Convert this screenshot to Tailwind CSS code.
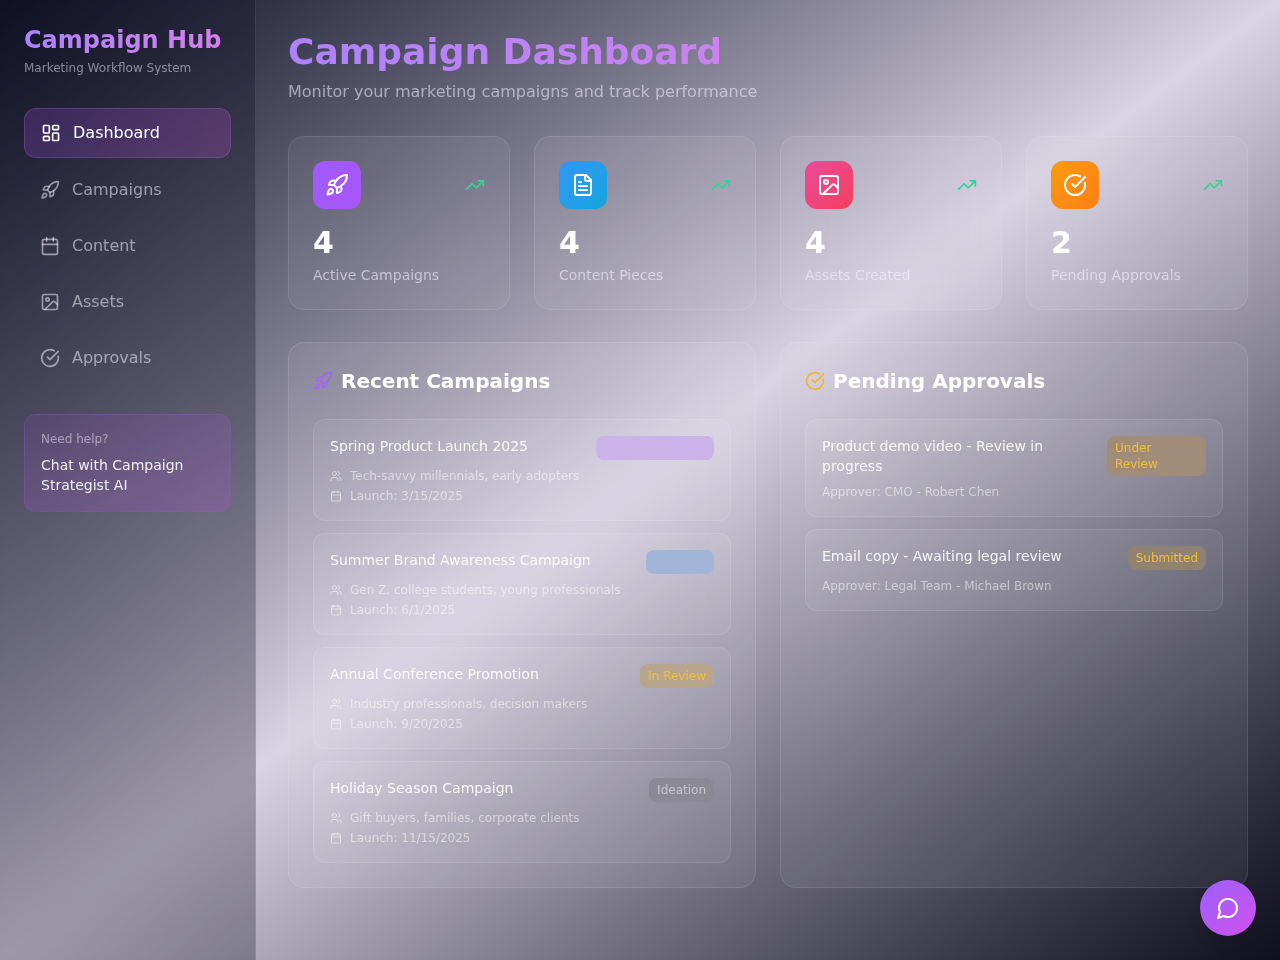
<!DOCTYPE html>
<html lang="en">
<head>
  <meta charset="UTF-8" />
  <meta name="viewport" content="width=device-width, initial-scale=1.0"/>
  <title>Campaign Hub | Dashboard</title>
  <script src="https://cdn.jsdelivr.net/npm/@tailwindcss/browser@4"></script>
</head>
<body class="h-[960px] overflow-hidden bg-gradient-to-br from-[#0f0f23] via-[#d9d3e3] to-[#0f0f1e] text-white font-['DejaVu_Sans',sans-serif]">
  <div class="flex h-full">

    <!-- Sidebar -->
    <aside class="w-64 shrink-0 h-full p-6 bg-[#0f0f23]/30 backdrop-blur-xl border-r border-white/10">
      <h1 class="text-2xl leading-8 font-bold bg-gradient-to-r from-[#ac82fb] to-[#d77fec] bg-clip-text text-transparent">Campaign Hub</h1>
      <p class="text-xs text-[#f4f0ff]/50 mt-1 mb-8">Marketing Workflow System</p>

      <nav class="space-y-2">
        <a class="flex items-center gap-3 px-4 py-3 rounded-xl bg-gradient-to-r from-[#a855f7]/20 to-[#c04fd0]/25 border border-[#c084fc]/20 text-white">
          <svg class="w-5 h-5" viewBox="0 0 24 24" fill="none" stroke="currentColor" stroke-width="2" stroke-linecap="round" stroke-linejoin="round"><rect x="3" y="3" width="7" height="9" rx="1"/><rect x="14" y="3" width="7" height="5" rx="1"/><rect x="14" y="12" width="7" height="9" rx="1"/><rect x="3" y="16" width="7" height="5" rx="1"/></svg>
          <span>Dashboard</span>
        </a>
        <a class="flex items-center gap-3 px-4 py-3 rounded-xl text-[#f4f0ff]/55">
          <svg class="w-5 h-5" viewBox="0 0 24 24" fill="none" stroke="currentColor" stroke-width="2" stroke-linecap="round" stroke-linejoin="round"><path d="M4.5 16.5c-1.5 1.26-2 5-2 5s3.74-.5 5-2c.71-.84.7-2.13-.09-2.91a2.18 2.18 0 0 0-2.91-.09z"/><path d="m12 15-3-3a22 22 0 0 1 2-3.95A12.88 12.88 0 0 1 22 2c0 2.72-.78 7.5-6 11a22.35 22.35 0 0 1-4 2z"/><path d="M9 12H4s.55-3.03 2-4c1.62-1.08 5 0 5 0"/><path d="M12 15v5s3.03-.55 4-2c1.08-1.62 0-5 0-5"/></svg>
          <span>Campaigns</span>
        </a>
        <a class="flex items-center gap-3 px-4 py-3 rounded-xl text-[#f4f0ff]/55">
          <svg class="w-5 h-5" viewBox="0 0 24 24" fill="none" stroke="currentColor" stroke-width="2" stroke-linecap="round" stroke-linejoin="round"><path d="M8 2v4"/><path d="M16 2v4"/><rect x="3" y="4" width="18" height="18" rx="2"/><path d="M3 10h18"/></svg>
          <span>Content</span>
        </a>
        <a class="flex items-center gap-3 px-4 py-3 rounded-xl text-[#f4f0ff]/55">
          <svg class="w-5 h-5" viewBox="0 0 24 24" fill="none" stroke="currentColor" stroke-width="2" stroke-linecap="round" stroke-linejoin="round"><rect x="3" y="3" width="18" height="18" rx="2"/><circle cx="9" cy="9" r="2"/><path d="m21 15-3.086-3.086a2 2 0 0 0-2.828 0L6 21"/></svg>
          <span>Assets</span>
        </a>
        <a class="flex items-center gap-3 px-4 py-3 rounded-xl text-[#f4f0ff]/55">
          <svg class="w-5 h-5" viewBox="0 0 24 24" fill="none" stroke="currentColor" stroke-width="2" stroke-linecap="round" stroke-linejoin="round"><path d="M21.801 10A10 10 0 1 1 17 3.335"/><path d="m9 11 3 3L22 4"/></svg>
          <span>Approvals</span>
        </a>
      </nav>

      <div class="mt-8 p-4 rounded-xl bg-gradient-to-br from-[#a855f7]/10 to-[#b050d8]/25 border border-[#a855f7]/20">
        <p class="text-xs text-[#f4f0ff]/50 mb-2">Need help?</p>
        <p class="text-sm text-white/90">Chat with Campaign Strategist AI</p>
      </div>
    </aside>

    <!-- Main -->
    <main class="flex-1 p-8 transform-gpu">
      <h2 class="text-4xl font-bold mb-2 bg-gradient-to-r from-[#ac82fb] to-[#f07fe0] bg-clip-text text-transparent">Campaign Dashboard</h2>
      <p class="text-[#f4f0ff]/55 mb-8">Monitor your marketing campaigns and track performance</p>

      <div class="grid grid-cols-4 gap-6 mb-8">
        <div class="p-6 rounded-2xl bg-white/5 backdrop-blur-xl border border-white/10">
          <div class="flex items-center justify-between mb-4">
            <div class="w-12 h-12 rounded-xl bg-gradient-to-br from-[#9f5bfb] to-[#a855f7] flex items-center justify-center">
              <svg class="w-6 h-6" viewBox="0 0 24 24" fill="none" stroke="currentColor" stroke-width="2" stroke-linecap="round" stroke-linejoin="round"><path d="M4.5 16.5c-1.5 1.26-2 5-2 5s3.74-.5 5-2c.71-.84.7-2.13-.09-2.91a2.18 2.18 0 0 0-2.91-.09z"/><path d="m12 15-3-3a22 22 0 0 1 2-3.95A12.88 12.88 0 0 1 22 2c0 2.72-.78 7.5-6 11a22.35 22.35 0 0 1-4 2z"/><path d="M9 12H4s.55-3.03 2-4c1.62-1.08 5 0 5 0"/><path d="M12 15v5s3.03-.55 4-2c1.08-1.62 0-5 0-5"/></svg>
            </div>
            <svg class="w-5 h-5 text-[#34d399]" viewBox="0 0 24 24" fill="none" stroke="currentColor" stroke-width="2" stroke-linecap="round" stroke-linejoin="round"><polyline points="22 7 13.5 15.5 8.5 10.5 2 17"/><polyline points="16 7 22 7 22 13"/></svg>
          </div>
          <div class="text-3xl font-bold mb-1">4</div>
          <div class="text-sm text-[#f4f0ff]/60">Active Campaigns</div>
        </div>
        <div class="p-6 rounded-2xl bg-white/5 backdrop-blur-xl border border-white/10">
          <div class="flex items-center justify-between mb-4">
            <div class="w-12 h-12 rounded-xl bg-gradient-to-br from-[#3296f2] to-[#0ea5e0] flex items-center justify-center">
              <svg class="w-6 h-6" viewBox="0 0 24 24" fill="none" stroke="currentColor" stroke-width="2" stroke-linecap="round" stroke-linejoin="round"><path d="M15 2H6a2 2 0 0 0-2 2v16a2 2 0 0 0 2 2h12a2 2 0 0 0 2-2V7Z"/><path d="M14 2v4a2 2 0 0 0 2 2h4"/><path d="M10 9H8"/><path d="M16 13H8"/><path d="M16 17H8"/></svg>
            </div>
            <svg class="w-5 h-5 text-[#34d399]" viewBox="0 0 24 24" fill="none" stroke="currentColor" stroke-width="2" stroke-linecap="round" stroke-linejoin="round"><polyline points="22 7 13.5 15.5 8.5 10.5 2 17"/><polyline points="16 7 22 7 22 13"/></svg>
          </div>
          <div class="text-3xl font-bold mb-1">4</div>
          <div class="text-sm text-[#f4f0ff]/60">Content Pieces</div>
        </div>
        <div class="p-6 rounded-2xl bg-white/5 backdrop-blur-xl border border-white/10">
          <div class="flex items-center justify-between mb-4">
            <div class="w-12 h-12 rounded-xl bg-gradient-to-br from-[#ec4899] to-[#f43f5e] flex items-center justify-center">
              <svg class="w-6 h-6" viewBox="0 0 24 24" fill="none" stroke="currentColor" stroke-width="2" stroke-linecap="round" stroke-linejoin="round"><rect x="3" y="3" width="18" height="18" rx="2"/><circle cx="9" cy="9" r="2"/><path d="m21 15-3.086-3.086a2 2 0 0 0-2.828 0L6 21"/></svg>
            </div>
            <svg class="w-5 h-5 text-[#34d399]" viewBox="0 0 24 24" fill="none" stroke="currentColor" stroke-width="2" stroke-linecap="round" stroke-linejoin="round"><polyline points="22 7 13.5 15.5 8.5 10.5 2 17"/><polyline points="16 7 22 7 22 13"/></svg>
          </div>
          <div class="text-3xl font-bold mb-1">4</div>
          <div class="text-sm text-[#f4f0ff]/60">Assets Created</div>
        </div>
        <div class="p-6 rounded-2xl bg-white/5 backdrop-blur-xl border border-white/10">
          <div class="flex items-center justify-between mb-4">
            <div class="w-12 h-12 rounded-xl bg-gradient-to-br from-[#f89a10] to-[#fd7f14] flex items-center justify-center">
              <svg class="w-6 h-6" viewBox="0 0 24 24" fill="none" stroke="currentColor" stroke-width="2" stroke-linecap="round" stroke-linejoin="round"><path d="M21.801 10A10 10 0 1 1 17 3.335"/><path d="m9 11 3 3L22 4"/></svg>
            </div>
            <svg class="w-5 h-5 text-[#34d399]" viewBox="0 0 24 24" fill="none" stroke="currentColor" stroke-width="2" stroke-linecap="round" stroke-linejoin="round"><polyline points="22 7 13.5 15.5 8.5 10.5 2 17"/><polyline points="16 7 22 7 22 13"/></svg>
          </div>
          <div class="text-3xl font-bold mb-1">2</div>
          <div class="text-sm text-[#f4f0ff]/60">Pending Approvals</div>
        </div>
      </div>

      <div class="grid grid-cols-2 gap-6">
        <!-- Recent campaigns -->
        <section class="p-6 rounded-2xl bg-white/5 backdrop-blur-xl border border-white/10 h-[546px]">
          <h3 class="flex items-center gap-2 text-xl font-semibold mb-6">
            <svg class="w-5 h-5 text-[#a366f7]" viewBox="0 0 24 24" fill="none" stroke="currentColor" stroke-width="2" stroke-linecap="round" stroke-linejoin="round"><path d="M4.5 16.5c-1.5 1.26-2 5-2 5s3.74-.5 5-2c.71-.84.7-2.13-.09-2.91a2.18 2.18 0 0 0-2.91-.09z"/><path d="m12 15-3-3a22 22 0 0 1 2-3.95A12.88 12.88 0 0 1 22 2c0 2.72-.78 7.5-6 11a22.35 22.35 0 0 1-4 2z"/><path d="M9 12H4s.55-3.03 2-4c1.62-1.08 5 0 5 0"/><path d="M12 15v5s3.03-.55 4-2c1.08-1.62 0-5 0-5"/></svg>
            Recent Campaigns
          </h3>
          <div class="space-y-3">
            <div class="p-4 rounded-xl bg-white/5 border border-white/10">
              <div class="flex items-start justify-between mb-2">
                <span class="text-sm text-white/90">Spring Product Launch 2025</span>
                <span class="w-[118px] h-6 rounded-lg bg-[#cbb2e8]"></span>
              </div>
              <div class="space-y-1 text-xs text-white/50">
                <div class="flex items-center gap-2">
                  <svg class="w-3 h-3" viewBox="0 0 24 24" fill="none" stroke="currentColor" stroke-width="2" stroke-linecap="round" stroke-linejoin="round"><path d="M16 21v-2a4 4 0 0 0-4-4H6a4 4 0 0 0-4 4v2"/><circle cx="9" cy="7" r="4"/><path d="M22 21v-2a4 4 0 0 0-3-3.87"/><path d="M16 3.13a4 4 0 0 1 0 7.75"/></svg>
                  Tech-savvy millennials, early adopters
                </div>
                <div class="flex items-center gap-2">
                  <svg class="w-3 h-3" viewBox="0 0 24 24" fill="none" stroke="currentColor" stroke-width="2" stroke-linecap="round" stroke-linejoin="round"><path d="M8 2v4"/><path d="M16 2v4"/><rect x="3" y="4" width="18" height="18" rx="2"/><path d="M3 10h18"/></svg>
                  Launch: 3/15/2025
                </div>
              </div>
            </div>
            <div class="p-4 rounded-xl bg-white/5 border border-white/10">
              <div class="flex items-start justify-between mb-2">
                <span class="text-sm text-white/90">Summer Brand Awareness Campaign</span>
                <span class="w-[68px] h-6 rounded-lg bg-[#a3b4d9]"></span>
              </div>
              <div class="space-y-1 text-xs text-white/50">
                <div class="flex items-center gap-2">
                  <svg class="w-3 h-3" viewBox="0 0 24 24" fill="none" stroke="currentColor" stroke-width="2" stroke-linecap="round" stroke-linejoin="round"><path d="M16 21v-2a4 4 0 0 0-4-4H6a4 4 0 0 0-4 4v2"/><circle cx="9" cy="7" r="4"/><path d="M22 21v-2a4 4 0 0 0-3-3.87"/><path d="M16 3.13a4 4 0 0 1 0 7.75"/></svg>
                  Gen Z, college students, young professionals
                </div>
                <div class="flex items-center gap-2">
                  <svg class="w-3 h-3" viewBox="0 0 24 24" fill="none" stroke="currentColor" stroke-width="2" stroke-linecap="round" stroke-linejoin="round"><path d="M8 2v4"/><path d="M16 2v4"/><rect x="3" y="4" width="18" height="18" rx="2"/><path d="M3 10h18"/></svg>
                  Launch: 6/1/2025
                </div>
              </div>
            </div>
            <div class="p-4 rounded-xl bg-white/5 border border-white/10">
              <div class="flex items-start justify-between mb-2">
                <span class="text-sm text-white/90">Annual Conference Promotion</span>
                <span class="px-2 py-1 rounded-lg text-xs bg-[#b8a58e] text-[#f0bf3c]">In Review</span>
              </div>
              <div class="space-y-1 text-xs text-white/50">
                <div class="flex items-center gap-2">
                  <svg class="w-3 h-3" viewBox="0 0 24 24" fill="none" stroke="currentColor" stroke-width="2" stroke-linecap="round" stroke-linejoin="round"><path d="M16 21v-2a4 4 0 0 0-4-4H6a4 4 0 0 0-4 4v2"/><circle cx="9" cy="7" r="4"/><path d="M22 21v-2a4 4 0 0 0-3-3.87"/><path d="M16 3.13a4 4 0 0 1 0 7.75"/></svg>
                  Industry professionals, decision makers
                </div>
                <div class="flex items-center gap-2">
                  <svg class="w-3 h-3" viewBox="0 0 24 24" fill="none" stroke="currentColor" stroke-width="2" stroke-linecap="round" stroke-linejoin="round"><path d="M8 2v4"/><path d="M16 2v4"/><rect x="3" y="4" width="18" height="18" rx="2"/><path d="M3 10h18"/></svg>
                  Launch: 9/20/2025
                </div>
              </div>
            </div>
            <div class="p-4 rounded-xl bg-white/5 border border-white/10">
              <div class="flex items-start justify-between mb-2">
                <span class="text-sm text-white/90">Holiday Season Campaign</span>
                <span class="px-2 py-1 rounded-lg text-xs bg-[#8b8996] text-white/50">Ideation</span>
              </div>
              <div class="space-y-1 text-xs text-white/50">
                <div class="flex items-center gap-2">
                  <svg class="w-3 h-3" viewBox="0 0 24 24" fill="none" stroke="currentColor" stroke-width="2" stroke-linecap="round" stroke-linejoin="round"><path d="M16 21v-2a4 4 0 0 0-4-4H6a4 4 0 0 0-4 4v2"/><circle cx="9" cy="7" r="4"/><path d="M22 21v-2a4 4 0 0 0-3-3.87"/><path d="M16 3.13a4 4 0 0 1 0 7.75"/></svg>
                  Gift buyers, families, corporate clients
                </div>
                <div class="flex items-center gap-2">
                  <svg class="w-3 h-3" viewBox="0 0 24 24" fill="none" stroke="currentColor" stroke-width="2" stroke-linecap="round" stroke-linejoin="round"><path d="M8 2v4"/><path d="M16 2v4"/><rect x="3" y="4" width="18" height="18" rx="2"/><path d="M3 10h18"/></svg>
                  Launch: 11/15/2025
                </div>
              </div>
            </div>
          </div>
        </section>

        <!-- Pending approvals -->
        <section class="p-6 rounded-2xl bg-white/5 backdrop-blur-xl border border-white/10 h-[546px]">
          <h3 class="flex items-center gap-2 text-xl font-semibold mb-6">
            <svg class="w-5 h-5 text-[#eeb92f]" viewBox="0 0 24 24" fill="none" stroke="currentColor" stroke-width="2" stroke-linecap="round" stroke-linejoin="round"><path d="M21.801 10A10 10 0 1 1 17 3.335"/><path d="m9 11 3 3L22 4"/></svg>
            Pending Approvals
          </h3>
          <div class="space-y-3">
            <div class="p-4 rounded-xl bg-white/5 border border-white/10">
              <div class="flex items-start justify-between gap-4 mb-2">
                <span class="text-sm text-white/90">Product demo video - Review in progress</span>
                <span class="shrink-0 w-[99px] pl-2 pr-4 py-1 rounded-lg text-xs bg-[#a08c78] text-[#f0bf3c]">Under Review</span>
              </div>
              <p class="text-xs text-white/50">Approver: CMO - Robert Chen</p>
            </div>
            <div class="p-4 rounded-xl bg-white/5 border border-white/10">
              <div class="flex items-start justify-between gap-4 mb-2">
                <span class="text-sm text-white/90">Email copy - Awaiting legal review</span>
                <span class="px-2 py-1 rounded-lg text-xs bg-[#8f8270] text-[#f0bf3c]">Submitted</span>
              </div>
              <p class="text-xs text-white/50">Approver: Legal Team - Michael Brown</p>
            </div>
          </div>
        </section>
      </div>
    </main>
  </div>

  <!-- Chat button -->
  <button class="fixed bottom-6 right-6 w-14 h-14 rounded-full bg-gradient-to-br from-[#9b60fc] to-[#d04eec] flex items-center justify-center shadow-lg">
    <svg class="w-6 h-6" viewBox="0 0 24 24" fill="none" stroke="currentColor" stroke-width="2" stroke-linecap="round" stroke-linejoin="round"><path d="M7.9 20A9 9 0 1 0 4 16.1L2 22Z"/></svg>
  </button>
</body>
</html>
